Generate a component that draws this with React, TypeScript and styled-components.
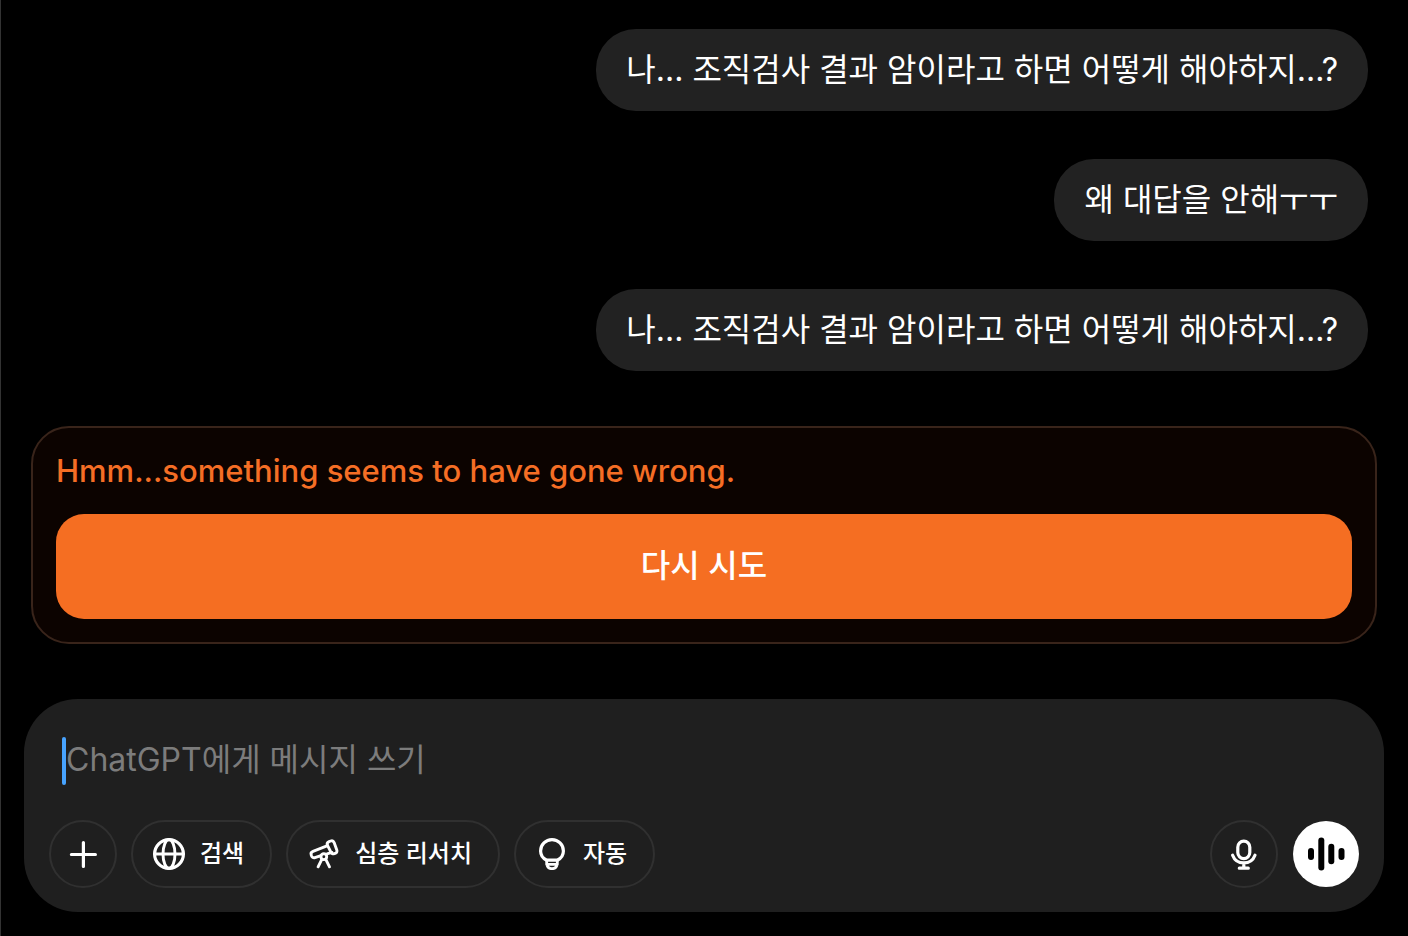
import React from 'react';
import styled, { createGlobalStyle } from 'styled-components';

const GlobalStyle = createGlobalStyle`
  * { box-sizing: border-box; }
  body {
    margin: 0;
    background: #000;
    color: #fff;
    font-family: Inter, "Noto Sans CJK KR", sans-serif;
  }
  button, input { font: inherit; color: inherit; }
`;

const Page = styled.div`
  min-height: 100vh;
  display: flex;
  flex-direction: column;
  border-left: 1px solid #333;
  padding: 29px 24px 24px 23px;
`;

const Thread = styled.main`
  flex: 1;
  display: flex;
  flex-direction: column;
`;

const Messages = styled.ol`
  list-style: none;
  margin: 0;
  padding: 0 16px;
  display: flex;
  flex-direction: column;
  align-items: flex-end;
  gap: 48px;
`;

const Bubble = styled.li`
  padding: 17px 30px;
  border-radius: 40px;
  background: #222;
  font-size: 32px;
  line-height: 48px;
`;

const ErrorCard = styled.section`
  margin: 55px 7px 55px;
  padding: 22px 23px 23px;
  border: 2px solid #39241a;
  border-radius: 38px;
  background: #0c0300;
`;

const ErrorText = styled.p`
  margin: 0 0 22px;
  font-size: 31px;
  line-height: 42px;
  font-weight: 500;
  color: #f56e25;
`;

const RetryButton = styled.button`
  display: block;
  width: 100%;
  padding: 28px 28px 29px;
  border: 0;
  border-radius: 28px;
  background: #f56e22;
  font-size: 32px;
  line-height: 48px;
  font-weight: 500;
`;

const Composer = styled.form`
  padding: 38px 25px 24px;
  border-radius: 54px;
  background: #1f1f1f;
`;

const Field = styled.label`
  display: flex;
  align-items: flex-start;
  padding: 0 13px;
  margin-bottom: 35px;
`;

const Caret = styled.span`
  width: 4px;
  height: 48px;
  border-radius: 2px;
  background: #47a3ff;
`;

const MessageInput = styled.input`
  flex: 1;
  min-width: 0;
  height: 44px;
  padding: 0;
  border: 0;
  outline: 0;
  background: transparent;
  font-size: 32px;
  &::placeholder { color: #7c7c7c; opacity: 1; }
`;

const Tools = styled.div`
  display: flex;
  align-items: center;
  justify-content: space-between;
`;

const ToolGroup = styled.div<{ $gap: number }>`
  display: flex;
  align-items: center;
  gap: ${(p) => p.$gap}px;
`;

const RoundButton = styled.button<{ $filled?: boolean }>`
  display: grid;
  place-items: center;
  width: ${(p) => (p.$filled ? 66 : 68)}px;
  height: ${(p) => (p.$filled ? 66 : 68)}px;
  padding: 0;
  border: ${(p) => (p.$filled ? '0' : '2px solid #303030')};
  border-radius: 50%;
  background: ${(p) => (p.$filled ? '#fff' : 'transparent')};
  color: ${(p) => (p.$filled ? '#000' : '#fff')};
`;

const Pill = styled.button`
  display: flex;
  align-items: center;
  gap: 15px;
  height: 68px;
  padding: 0 26px 0 20px;
  border: 2px solid #303030;
  border-radius: 34px;
  background: transparent;
  font-size: 24px;
  line-height: 36px;
  font-weight: 500;
  white-space: nowrap;
`;

const Glyph = styled.svg.attrs({ viewBox: '0 0 32 32', 'aria-hidden': true })`
  display: block;
  flex: none;
  width: 32px;
  height: 32px;
  fill: none;
  stroke: currentColor;
  stroke-width: 3.2;
  stroke-linecap: round;
  stroke-linejoin: round;
`;

const PlusIcon = () => (
  <Glyph>
    <path d="M16.4 4.5v24M4.4 16.5h24" />
  </Glyph>
);

const GlobeIcon = () => (
  <Glyph>
    <circle cx="16" cy="16" r="14.4" />
    <ellipse cx="16" cy="16" rx="6" ry="14.4" strokeWidth="2.9" />
    <path d="M1.6 16h28.800" strokeWidth="2.9" />
  </Glyph>
);

const TelescopeIcon = () => (
  <Glyph>
    <g strokeWidth="2.9">
      <path d="M19.600 7.700 5 13.400c-1.600.6-2.300 2-1.800 3.500l.3 1c.5 1.500 1.900 2.200 3.400 1.700l6-1.900M19 15.900l5-1.500" />
      <path d="M19.400 7.200c-.6-1.600.1-3 1.600-3.600l1.600-.6c1.500-.6 2.900.1 3.500 1.600l2.700 7.400c.5 1.500-.1 2.900-1.600 3.400l-.9.3c-1.500.5-2.900-.1-3.400-1.600z" />
      <circle cx="15.800" cy="18.700" r="2.900" />
      <path d="m13.800 21.300-3.700 7.500M17.800 21.300l3.700 7.500" />
    </g>
  </Glyph>
);

const BulbIcon = () => (
  <Glyph>
    <path d="M10.700 22.200C6.900 20.400 4.600 17 4.600 13a11.400 11.400 0 0 1 22.800 0c0 4-2.300 7.400-6.100 9.200z" />
    <path d="M10.700 22.200v4.200h10.600v-4.200M10.900 26.600c.6 2.500 2.600 4.100 5.100 4.100s4.500-1.600 5.100-4.100" strokeWidth="2.800" />
  </Glyph>
);

const MicIcon = () => (
  <Glyph>
    <rect x="9.800" y="3.200" width="12" height="17.400" rx="6" />
    <path d="M4.600 17.200C6.400 22 10.700 24.900 15.800 24.900s9.400-2.900 11.200-7.700M15.800 24.900v5.300M11.300 30.200h9" />
  </Glyph>
);

const VoiceIcon = () => (
  <svg width="40" height="34" viewBox="0 0 40 34" fill="currentColor" aria-hidden="true">
    <rect x="2" y="11" width="6" height="12" rx="3" />
    <rect x="12.300" y="0.500" width="6" height="33" rx="3" />
    <rect x="22.300" y="6.800" width="6" height="20.400" rx="3" />
    <rect x="32.500" y="11" width="6" height="12" rx="3" />
  </svg>
);

const messages = [
  '나... 조직검사 결과 암이라고 하면 어떻게 해야하지...?',
  '왜 대답을 안해ㅜㅜ',
  '나... 조직검사 결과 암이라고 하면 어떻게 해야하지...?',
];

const modes = [
  { label: '검색', Icon: GlobeIcon },
  { label: '심층 리서치', Icon: TelescopeIcon },
  { label: '자동', Icon: BulbIcon },
];

export default function App() {
  return (
    <Page lang="ko">
      <GlobalStyle />
      <Thread>
        <Messages>
          {messages.map((text, i) => (
            <Bubble key={i}>{text}</Bubble>
          ))}
        </Messages>
        <ErrorCard role="alert">
          <ErrorText>Hmm...something seems to have gone wrong.</ErrorText>
          <RetryButton type="button">다시 시도</RetryButton>
        </ErrorCard>
      </Thread>
      <Composer onSubmit={(e) => e.preventDefault()}>
        <Field>
          <Caret />
          <MessageInput type="text" aria-label="메시지" placeholder="ChatGPT에게 메시지 쓰기" />
        </Field>
        <Tools>
          <ToolGroup $gap={14}>
            <RoundButton type="button" aria-label="추가">
              <PlusIcon />
            </RoundButton>
            {modes.map(({ label, Icon }) => (
              <Pill type="button" key={label}>
                <Icon />
                {label}
              </Pill>
            ))}
          </ToolGroup>
          <ToolGroup $gap={15}>
            <RoundButton type="button" aria-label="음성 입력">
              <MicIcon />
            </RoundButton>
            <RoundButton type="button" aria-label="음성 대화" $filled>
              <VoiceIcon />
            </RoundButton>
          </ToolGroup>
        </Tools>
      </Composer>
    </Page>
  );
}
